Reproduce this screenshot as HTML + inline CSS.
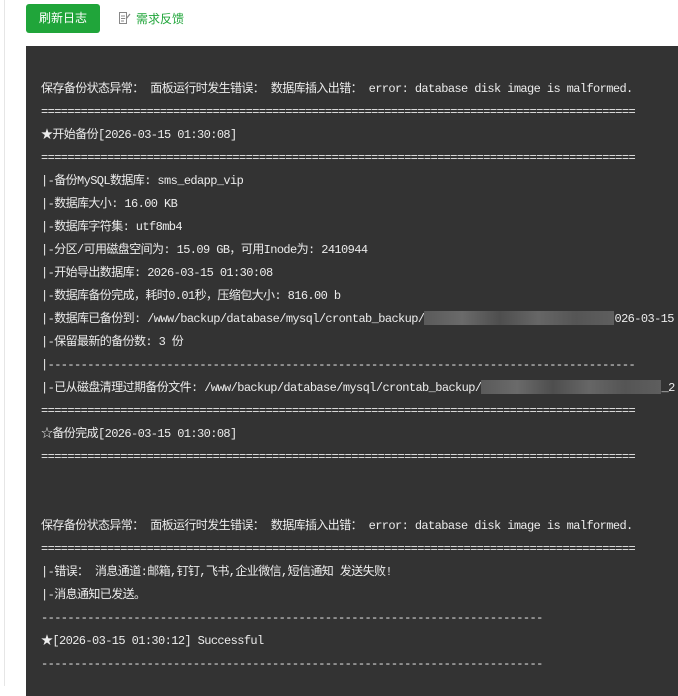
<!DOCTYPE html>
<html><head><meta charset="utf-8"><style>
html,body{margin:0;padding:0;width:678px;height:686px;overflow:hidden;background:#fff;font-family:"Liberation Sans","Noto Sans CJK SC",sans-serif;}
.side{position:absolute;left:0;top:0;width:4px;height:686px;border-right:1px solid #e6e6e6;}
.btn{position:absolute;left:26px;top:4px;width:74px;height:29px;background:#20a53a;border-radius:3px;color:#fff;font-size:12px;line-height:29px;text-align:center;}
.fb{position:absolute;left:118px;top:11px;font-size:12px;color:#20a53a;line-height:16px;}
.fb svg{vertical-align:-2px;margin-right:5px}
.panel{position:absolute;left:26px;top:46px;width:660px;height:650px;background:#333;overflow:hidden;}
pre{margin:0;padding:9px 0 0 15px;font-family:"Liberation Mono","Noto Sans CJK SC",monospace;font-size:12px;letter-spacing:-0.6px;line-height:23px;color:#ececec;white-space:pre;}
.blur{display:inline-block;height:14px;vertical-align:-3px;background:linear-gradient(90deg,#5a5a5a,#6a6a6a 20%,#4e4e4e 40%,#666 60%,#555 80%,#5e5e5e);}
</style></head><body>
<div class="side"></div>
<div class="btn">刷新日志</div>
<div class="fb"><svg width="13" height="14" viewBox="0 0 13 14"><path d="M1.5 1.5h7v11h-7z M3 5h4 M3 7.5h4 M3 10h3" fill="none" stroke="#888" stroke-width="1"/><path d="M8 8l4-5" stroke="#888" stroke-width="1.2"/></svg>需求反馈</div>
<div class="panel"><pre>

保存备份状态异常： 面板运行时发生错误： 数据库插入出错： error: database disk image is malformed.
==========================================================================================
★开始备份[2026-03-15 01:30:08]
==========================================================================================
|-备份MySQL数据库: sms_edapp_vip
|-数据库大小: 16.00 KB
|-数据库字符集: utf8mb4
|-分区/可用磁盘空间为: 15.09 GB，可用Inode为: 2410944
|-开始导出数据库: 2026-03-15 01:30:08
|-数据库备份完成，耗时0.01秒，压缩包大小: 816.00 b
|-数据库已备份到: /www/backup/database/mysql/crontab_backup/<span class="blur" style="width:190px"></span>026-03-15
|-保留最新的备份数: 3 份
|-----------------------------------------------------------------------------------------
|-已从磁盘清理过期备份文件: /www/backup/database/mysql/crontab_backup/<span class="blur" style="width:180px"></span>_2
==========================================================================================
☆备份完成[2026-03-15 01:30:08]
==========================================================================================


保存备份状态异常： 面板运行时发生错误： 数据库插入出错： error: database disk image is malformed.
==========================================================================================
|-错误： 消息通道:邮箱,钉钉,飞书,企业微信,短信通知 发送失败!
|-消息通知已发送。
----------------------------------------------------------------------------
★[2026-03-15 01:30:12] Successful
----------------------------------------------------------------------------
</pre></div>
</body></html>
